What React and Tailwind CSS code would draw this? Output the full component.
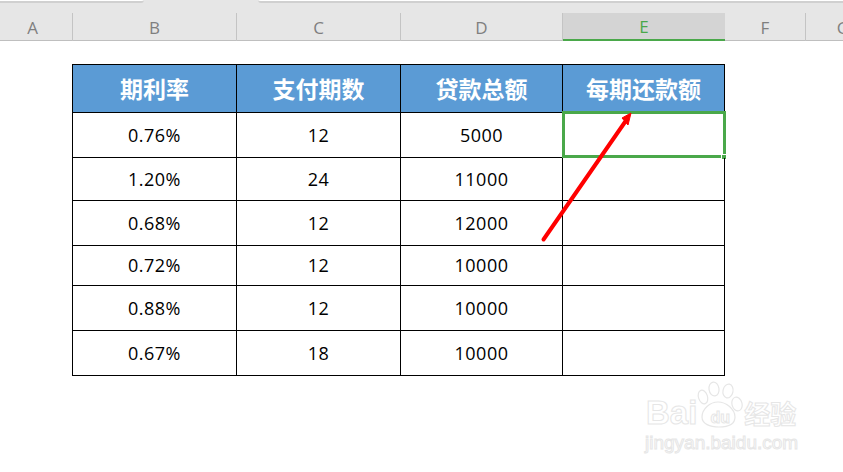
import React from 'react';

const columns = [
  { name: 'A', width: 'w-[73px] pr-[7px]' },
  { name: 'B', width: 'w-[164px]' },
  { name: 'C', width: 'w-[164px]' },
  { name: 'D', width: 'w-[162px]' },
  { name: 'E', width: 'w-[162px]', selected: true },
  { name: 'F', width: 'w-[81px]' },
  { name: 'G', width: 'w-[75px]' },
];

const headers = ['期利率', '支付期数', '贷款总额', '每期还款额'];

const rows = [
  { rate: '0.76%', periods: '12', total: '5000', height: 'h-[45px]', active: true },
  { rate: '1.20%', periods: '24', total: '11000', height: 'h-[43px]' },
  { rate: '0.68%', periods: '12', total: '12000', height: 'h-[45px]' },
  { rate: '0.72%', periods: '12', total: '10000', height: 'h-[40px]' },
  { rate: '0.88%', periods: '12', total: '10000', height: 'h-[45px]' },
  { rate: '0.67%', periods: '18', total: '10000', height: 'h-[45px]' },
];

const cellWidths = ['w-[164px]', 'w-[164px]', 'w-[162px]', 'w-[162px]'];

const outline = 'text-white [-webkit-text-stroke:1px_#e6e6e6]';

function Watermark() {
  return (
    <div className="absolute left-[645px] top-[380px] flex w-[156px] flex-col font-['Liberation_Sans',sans-serif]">
      <div className="flex h-[52px] items-end pb-[1px]">
        <span className={`pl-[1px] text-[33px] leading-[36px] font-bold ${outline}`}>Bai</span>
        {/* paw print with the du inside */}
        <div className="relative flex h-[50px] w-[46px] shrink-0 items-end justify-center pb-[4px]">
          <svg className="absolute inset-0" width="46" height="50" viewBox="0 0 46 50" fill="white" stroke="#e6e6e6" strokeWidth="1.2">
            <ellipse cx="6" cy="16" rx="4.500" ry="7" transform="rotate(-18 6 16)" />
            <ellipse cx="17" cy="8" rx="5" ry="7" transform="rotate(-8 17 8)" />
            <ellipse cx="31" cy="10" rx="5" ry="7" transform="rotate(12 31 10)" />
            <ellipse cx="40" cy="23" rx="5" ry="7" transform="rotate(-15 40 23)" />
            <path d="M5 36c0-8 8-15 16-15s17 7 17 15c0 7-7 10-16 10s-17-3-17-10z" />
          </svg>
          <span className={`relative text-[16px] leading-[18px] font-bold ${outline}`}>du</span>
        </div>
        <span className={`pl-[1px] font-['Noto_Sans_CJK_SC',sans-serif] text-[26px] leading-[36px] font-bold ${outline}`}>经验</span>
      </div>
      <span className={`whitespace-nowrap text-[19px] leading-[22px] ${outline}`}>jingyan.baidu.com</span>
    </div>
  );
}

function App() {
  return (
    <div className="relative h-[472px] w-[843px] overflow-hidden bg-white font-['Open_Sans','Noto_Sans_CJK_SC',sans-serif]">
      {/* column letter bar with the bottom edge of the tabs above it */}
      <div className="h-[41px] border-b border-[#bfbfbf] bg-[#e6e6e6]">
        <div className="flex h-[3px]">
          <div className="h-full w-[144px] rounded-br-[3px] border-b-2 border-[#d0d0d0] bg-white" />
          <div className="h-full w-[114px]" />
          <div className="h-full flex-1 rounded-bl-[3px] border-b-2 border-[#d0d0d0] bg-white" />
        </div>
        <div className="mt-[10px] flex h-[28px]">
          {columns.map((col) => (
            <div
              key={col.name}
              className={`flex shrink-0 items-center justify-center pt-[1px] text-[17px] ${col.width} ${
                col.selected
                  ? 'border-b-[2px] border-[#4aa84a] bg-[#d4d4d4] text-[#4aa84a]'
                  : 'border-r border-[#c4c4c4] text-[#7f7f7f]'
              }`}
            >
              {col.name}
            </div>
          ))}
        </div>
      </div>

      <div className="ml-[72px] mt-[23px] w-[653px] border-l border-t border-black">
        <div className="flex h-[48px] border-b border-black bg-[#5b9bd5]">
          {headers.map((title, i) => (
            <div
              key={title}
              className={`flex items-center justify-center border-r border-black font-['Noto_Sans_CJK_SC',sans-serif] text-[23px] font-bold text-white ${cellWidths[i]}`}
            >
              {title}
            </div>
          ))}
        </div>
        {rows.map((row) => (
          <div key={row.rate} className={`flex border-b border-black text-[18px] tracking-[0.5px] text-black ${row.height}`}>
            {[row.rate, row.periods, row.total].map((value, i) => (
              <div key={i} className={`flex items-center justify-center border-r border-black ${cellWidths[i]}`}>
                {value}
              </div>
            ))}
            <div className={`relative border-r border-black ${cellWidths[3]}`}>
              {row.active && (
                <>
                  {/* selected cell outline and fill handle */}
                  <div className="absolute -left-px -top-[2px] h-[47px] w-[164px] border-[3px] border-[#4aa84a]" />
                  <div className="absolute -bottom-[3px] -right-[3px] h-[6px] w-[6px] border border-white bg-[#4aa84a]" />
                </>
              )}
            </div>
          </div>
        ))}
      </div>

      {/* red annotation arrow */}
      <svg className="absolute inset-0" width="843" height="472" viewBox="0 0 843 472">
        <path d="M543.500 239.500L625 122" stroke="#ff0000" strokeWidth="4" strokeLinecap="round" fill="none" />
        <path d="M631 113L622 118L628 125Z" fill="#ff0000" stroke="#ff0000" strokeWidth="1" />
      </svg>

      <Watermark />
    </div>
  );
}

export default App;
